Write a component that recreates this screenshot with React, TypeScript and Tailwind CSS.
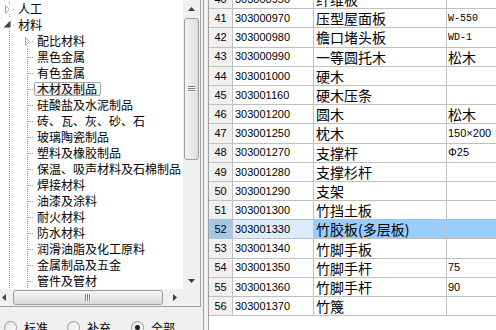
import React from "react";

type TreeItem = { level: number; label: string; exp?: "collapsed" | "expanded"; selected?: boolean; first?: boolean };

const treeItems: TreeItem[] = [
  { level: 0, label: "人工", exp: "collapsed" },
  { level: 0, label: "材料", exp: "expanded" },
  { level: 1, label: "配比材料", exp: "collapsed", first: true },
  { level: 1, label: "黑色金属" },
  { level: 1, label: "有色金属" },
  { level: 1, label: "木材及制品", selected: true },
  { level: 1, label: "硅酸盐及水泥制品" },
  { level: 1, label: "砖、瓦、灰、砂、石" },
  { level: 1, label: "玻璃陶瓷制品" },
  { level: 1, label: "塑料及橡胶制品" },
  { level: 1, label: "保温、吸声材料及石棉制品" },
  { level: 1, label: "焊接材料" },
  { level: 1, label: "油漆及涂料" },
  { level: 1, label: "耐火材料" },
  { level: 1, label: "防水材料" },
  { level: 1, label: "润滑油脂及化工原料" },
  { level: 1, label: "金属制品及五金" },
  { level: 1, label: "管件及管材" },
];

const rows: [string, string, string, string][] = [
  ["40", "303000950", "纤维板", ""],
  ["41", "303000970", "压型屋面板", "W-550"],
  ["42", "303000980", "檐口堵头板", "WD-1"],
  ["43", "303000990", "一等圆托木", "松木"],
  ["44", "303001000", "硬木", ""],
  ["45", "303001160", "硬木压条", ""],
  ["46", "303001200", "圆木", "松木"],
  ["47", "303001250", "枕木", "150×200"],
  ["48", "303001270", "支撑杆", "Φ25"],
  ["49", "303001280", "支撑杉杆", ""],
  ["50", "303001290", "支架", ""],
  ["51", "303001300", "竹挡土板", ""],
  ["52", "303001330", "竹胶板(多层板)", ""],
  ["53", "303001340", "竹脚手板", ""],
  ["54", "303001350", "竹脚手杆", "75"],
  ["55", "303001360", "竹脚手杆", "90"],
  ["56", "303001370", "竹篾", ""],
];

const DOT = "#a0a0a0";

function Guides({ item }: { item: TreeItem }) {
  if (item.level === 0) {
    return (
      <svg width={15} height={16} className="shrink-0" shapeRendering="crispEdges">
        {item.exp === "collapsed" ? (
          <>
            <line x1={9.5} y1={0} x2={9.5} y2={4} stroke={DOT} strokeDasharray="1 1" />
            <line x1={9.5} y1={13} x2={9.5} y2={16} stroke={DOT} strokeDasharray="1 1" />
            <path d="M5.5 4.5 L9.5 8.5 L5.5 12.5 Z" fill="white" stroke="#a6a6a6" shapeRendering="auto" />
          </>
        ) : (
          <>
            <line x1={9.5} y1={12} x2={9.5} y2={16} stroke={DOT} strokeDasharray="1 1" />
            <path d="M10.5 3.5 L10.5 10.5 L3.5 10.5 Z" fill="#404040" shapeRendering="auto" />
          </>
        )}
        <rect x={13} y={8} width={1} height={1} fill={DOT} />
      </svg>
    );
  }
  return (
    <svg width={34} height={16} className="shrink-0" shapeRendering="crispEdges">
      <line x1={9.5} y1={0} x2={9.5} y2={16} stroke={DOT} strokeDasharray="1 1" />
      {item.exp === "collapsed" ? (
        <>
          <line x1={27.5} y1={13} x2={27.5} y2={16} stroke={DOT} strokeDasharray="1 1" />
          <path d="M25.5 4.5 L29.5 8.5 L25.5 12.5 Z" fill="white" stroke="#a6a6a6" shapeRendering="auto" />
          <rect x={32} y={8} width={1} height={1} fill={DOT} />
        </>
      ) : (
        <>
          <line x1={27.5} y1={0} x2={27.5} y2={16} stroke={DOT} strokeDasharray="1 1" />
          <line x1={28} y1={8.5} x2={34} y2={8.5} stroke={DOT} strokeDasharray="1 1" />
        </>
      )}
    </svg>
  );
}

function TreeRow({ item }: { item: TreeItem }) {
  return (
    <div className="h-[16px] flex items-start whitespace-nowrap">
      <Guides item={item} />
      <div
        className={
          "mt-[1px] h-[14px] flex items-center pl-[2px] pr-[3px] rounded-[2px] border text-[12px] leading-[14px] " +
          (item.selected
            ? "border-[#a3a3a3] bg-linear-to-b from-[#fcfcfc] to-[#ebebeb]"
            : "border-transparent")
        }
      >
        {item.label}
      </div>
    </div>
  );
}

function VScroll() {
  return (
    <div className="w-[17px] h-full bg-[#f0f0f0] flex flex-col">
      <div className="h-[17px] flex items-center justify-center">
        <svg width={7} height={4}><path d="M0 4 L3.5 0 L7 4 Z" fill="#404040" /></svg>
      </div>
      <div className="mt-[1px] mx-[1px] h-[142px] rounded-[3px] border border-[#9c9c9c] bg-linear-to-r from-[#f5f5f5] to-[#dddddd] flex items-center justify-center">
        <div className="flex flex-col">
          <div className="w-[7px] h-px bg-[#7c7c7c]" />
          <div className="w-[7px] h-px bg-[#fafafa]" />
          <div className="w-[7px] h-px bg-[#7c7c7c]" />
          <div className="w-[7px] h-px bg-[#fafafa]" />
          <div className="w-[7px] h-px bg-[#7c7c7c]" />
          <div className="w-[7px] h-px bg-[#fafafa]" />
        </div>
      </div>
      <div className="flex-1" />
      <div className="h-[17px] flex items-center justify-center">
        <svg width={7} height={4}><path d="M0 0 L7 0 L3.5 4 Z" fill="#404040" /></svg>
      </div>
    </div>
  );
}

function HScroll() {
  return (
    <div className="w-[183px] h-[17px] bg-[#f0f0f0] flex items-center">
      <div className="w-[12px] h-full flex items-center pl-[2px]">
        <svg width={4} height={7}><path d="M4 0 L4 7 L0 3.5 Z" fill="#404040" /></svg>
      </div>
      <div className="ml-[1px] w-[150px] h-[15px] rounded-[3px] border border-[#9c9c9c] bg-linear-to-b from-[#f5f5f5] to-[#d9d9d9] flex items-center justify-center">
        <div className="flex">
          <div className="w-px h-[7px] bg-[#7c7c7c]" />
          <div className="w-px h-[7px] bg-[#fafafa]" />
          <div className="w-px h-[7px] bg-[#7c7c7c]" />
          <div className="w-px h-[7px] bg-[#fafafa]" />
          <div className="w-px h-[7px] bg-[#7c7c7c]" />
          <div className="w-px h-[7px] bg-[#fafafa]" />
        </div>
      </div>
      <div className="flex-1" />
      <div className="w-[17px] h-full flex items-center justify-center">
        <svg width={4} height={7}><path d="M0 0 L4 3.5 L0 7 Z" fill="#404040" /></svg>
      </div>
    </div>
  );
}

function Radio({ label, checked, w }: { label: string; checked?: boolean; w: string }) {
  return (
    <div className={"flex items-center gap-[7px] " + w}>
      <span className="w-[13px] h-[13px] rounded-full border border-[#9a9a9a] bg-linear-to-br from-[#e4e4e4] to-white flex items-center justify-center">
        {checked && <span className="w-[5px] h-[5px] rounded-full bg-[#1c1c1c]" />}
      </span>
      <span className="text-[12px] leading-[13px]">{label}</span>
    </div>
  );
}

export default function App() {
  return (
    <div className="w-[496px] h-[330px] bg-[#f0f0f0] flex overflow-hidden font-['Noto_Sans_CJK_SC',sans-serif] text-black">
      <div className="w-[201px] shrink-0 flex flex-col">
        <div className="h-[307px] shrink-0 border-r border-b border-[#a0a0a0] flex flex-col">
          <div className="h-[289px] flex">
            <div className="w-[183px] h-full bg-white overflow-hidden pt-[1px]">
              {treeItems.map((it, i) => (
                <TreeRow key={i} item={it} />
              ))}
            </div>
            <VScroll />
          </div>
          <div className="h-[17px] flex">
            <HScroll />
            <div className="w-[17px] bg-[#f0f0f0]" />
          </div>
        </div>
        <div className="flex pl-[4px] pt-[14px]">
          <Radio label="标准" w="w-[63px]" />
          <Radio label="补充" w="w-[64px]" />
          <Radio label="全部" checked w="w-[60px]" />
        </div>
      </div>
      <div className="w-[7px] shrink-0 flex">
        <div className="w-[2px]" />
        <div className="w-px h-full bg-[#a0a0a0]" />
      </div>
      <div className="flex-1 h-full bg-white border-l border-[#a0a0a0] overflow-hidden">
        <div className="-mt-[10px]">
          {rows.map((r) => {
            const sel = r[0] === "52";
            return (
              <div key={r[0]} className="h-[19.2px] flex border-b border-[#c0c0c0] whitespace-nowrap">
                <div
                  className={
                    "w-[24px] shrink-0 border-r border-[#c0c0c0] flex items-center justify-center font-['Liberation_Sans',sans-serif] text-[11px] " +
                    (sel ? "bg-[#a3c7eb]" : "bg-[#f0f0f0]")
                  }
                >
                  {r[0]}
                </div>
                <div
                  className={
                    "w-[81px] shrink-0 border-r border-[#c0c0c0] flex items-center pl-[2px] font-['Liberation_Sans',sans-serif] text-[11px] " +
                    (sel ? "bg-[#dcebfc]" : "")
                  }
                >
                  {r[1]}
                </div>
                <div
                  className={
                    "w-[133px] shrink-0 border-r border-[#c0c0c0] flex items-center pl-[2px] text-[14px] leading-none overflow-hidden " +
                    (sel ? "bg-[#99ccff]" : "")
                  }
                >
                  {r[2]}
                </div>
                <div
                  className={
                    "flex-1 flex items-center pl-[1px] overflow-hidden " +
                    (sel ? "bg-[#99ccff] " : "") +
                    (/^[WΦ0-9]/.test(r[3])
                      ? r[3].startsWith("W")
                        ? "font-['Liberation_Mono',monospace] text-[10px]"
                        : "font-['Liberation_Sans','Noto_Sans_CJK_SC',sans-serif] text-[11px]"
                      : "text-[14px] leading-none")
                  }
                >
                  {r[3]}
                </div>
              </div>
            );
          })}
        </div>
      </div>
    </div>
  );
}
